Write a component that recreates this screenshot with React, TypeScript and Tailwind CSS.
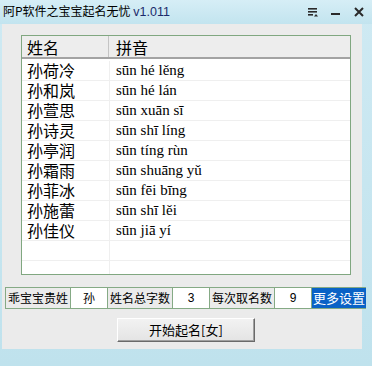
import React from "react"

const cjk = { fontFamily: '"Noto Sans CJK SC", "Noto Sans", sans-serif' }
const serif = { fontFamily: '"Liberation Serif", "Noto Sans CJK SC", serif' }

const rows: [string, string][] = [
  ["孙荷冷", "sūn hé lěng"],
  ["孙和岚", "sūn hé lán"],
  ["孙萱思", "sūn xuān sī"],
  ["孙诗灵", "sūn shī líng"],
  ["孙亭润", "sūn tíng rùn"],
  ["孙霜雨", "sūn shuāng yǔ"],
  ["孙菲冰", "sūn fēi bīng"],
  ["孙施蕾", "sūn shī lěi"],
  ["孙佳仪", "sūn jiā yí"],
  ["", ""],
  ["", ""],
]

function TitleIcons() {
  return (
    <div className="flex items-center gap-[13px] mr-[8px]">
      {/* menu */}
      <svg width="10" height="10" viewBox="0 0 10 10">
        <rect x="0" y="1" width="9" height="1.6" fill="#2a2a2a" />
        <rect x="0" y="4" width="9" height="1.6" fill="#2a2a2a" />
        <rect x="0" y="7" width="5" height="1.6" fill="#2a2a2a" />
        <path d="M6 9.5 L8 7 L10 9.5 Z" fill="#2a2a2a" />
      </svg>
      {/* minimize */}
      <svg width="10" height="10" viewBox="0 0 10 10">
        <rect x="0" y="6" width="9" height="2" fill="#2a2a2a" />
      </svg>
      {/* close */}
      <svg width="10" height="10" viewBox="0 0 10 10">
        <path d="M1 1 L9 9 M9 1 L1 9" stroke="#2a2a2a" strokeWidth="2" />
      </svg>
    </div>
  )
}

function Cell({ children, white, w }: { children: React.ReactNode; white?: boolean; w: string }) {
  return (
    <div
      className={`${w} h-full flex items-center justify-center border-r border-[#85aa85] text-[12px] text-black ${white ? "bg-white" : "bg-[#ebebeb]"}`}
    >
      {children}
    </div>
  )
}

export default function App() {
  return (
    <div className="w-[372px] h-[366px] flex flex-col bg-gradient-to-b from-[#cfeaf3] to-[#bfe2ed] overflow-hidden" style={cjk}>
      {/* title bar */}
      <div className="h-[24px] flex items-center justify-between bg-gradient-to-b from-[#d6eef6] to-[#c2e4ef]">
        <div className="ml-[3px] text-[12px] leading-none text-black">
          阿P软件之宝宝起名无忧 <span className="text-[#1b2a6b] text-[12.5px]" style={{ fontFamily: '"Liberation Sans", sans-serif' }}>v1.011</span>
        </div>
        <TitleIcons />
      </div>

      {/* client area */}
      <div className="ml-[2px] w-[360px] h-[325px] bg-[#ebebeb] flex flex-col">
        {/* list */}
        <div className="mt-[11px] ml-[19px] w-[330px] h-[240px] border border-[#80a780] bg-white flex flex-col overflow-hidden">
          <div className="h-[23px] shrink-0 flex bg-[#ededed] border-b-2 border-[#a3a3a3] text-[16px] leading-[20px] text-black">
            <div className="w-[87px] flex items-center pl-[5px] border-r border-[#c4c4c4]">姓名</div>
            <div className="flex-1 flex items-center pl-[7px]">拼音</div>
          </div>
          <div className="pt-[2px]">
            {rows.map(([name, py], i) => (
              <div key={i} className="h-[20px] flex border-b border-[#efefef]">
                <div className="w-[88px] flex items-center pl-[5px] text-[16px] leading-[19px] text-black border-r border-[#efefef]">
                  {name}
                </div>
                <div className="flex-1 flex items-center pl-[6px] text-[15px] leading-[19px] text-black" style={serif}>
                  {py}
                </div>
              </div>
            ))}
          </div>
        </div>

        {/* settings row */}
        <div className="mt-[12px] ml-[3px] w-[361px] h-[22px] flex border-y border-l border-[#85aa85]">
          <Cell w="w-[65px]">乖宝宝贵姓</Cell>
          <Cell w="w-[37px]" white>孙</Cell>
          <Cell w="w-[65px]">姓名总字数</Cell>
          <Cell w="w-[37px]" white><span style={{ fontFamily: '"Liberation Sans", sans-serif' }}>3</span></Cell>
          <Cell w="w-[65px]">每次取名数</Cell>
          <Cell w="w-[37px]" white><span style={{ fontFamily: '"Liberation Sans", sans-serif' }}>9</span></Cell>
          <div className="flex-1 h-full flex items-center justify-center bg-[#0a62c6] text-white text-[13px]">更多设置</div>
        </div>

        {/* start button */}
        <div className="mt-[9px] ml-[115px]">
          <button className="w-[138px] h-[24px] flex items-center justify-center bg-gradient-to-b from-[#f2f2f2] to-[#e4e4e4] border border-t-white border-l-white border-r-[#6a6a6a] border-b-[#6a6a6a] shadow-[inset_-1px_-1px_0_#a0a0a0] text-[13px] text-black">
            开始起名[女]
          </button>
        </div>
      </div>
    </div>
  )
}
